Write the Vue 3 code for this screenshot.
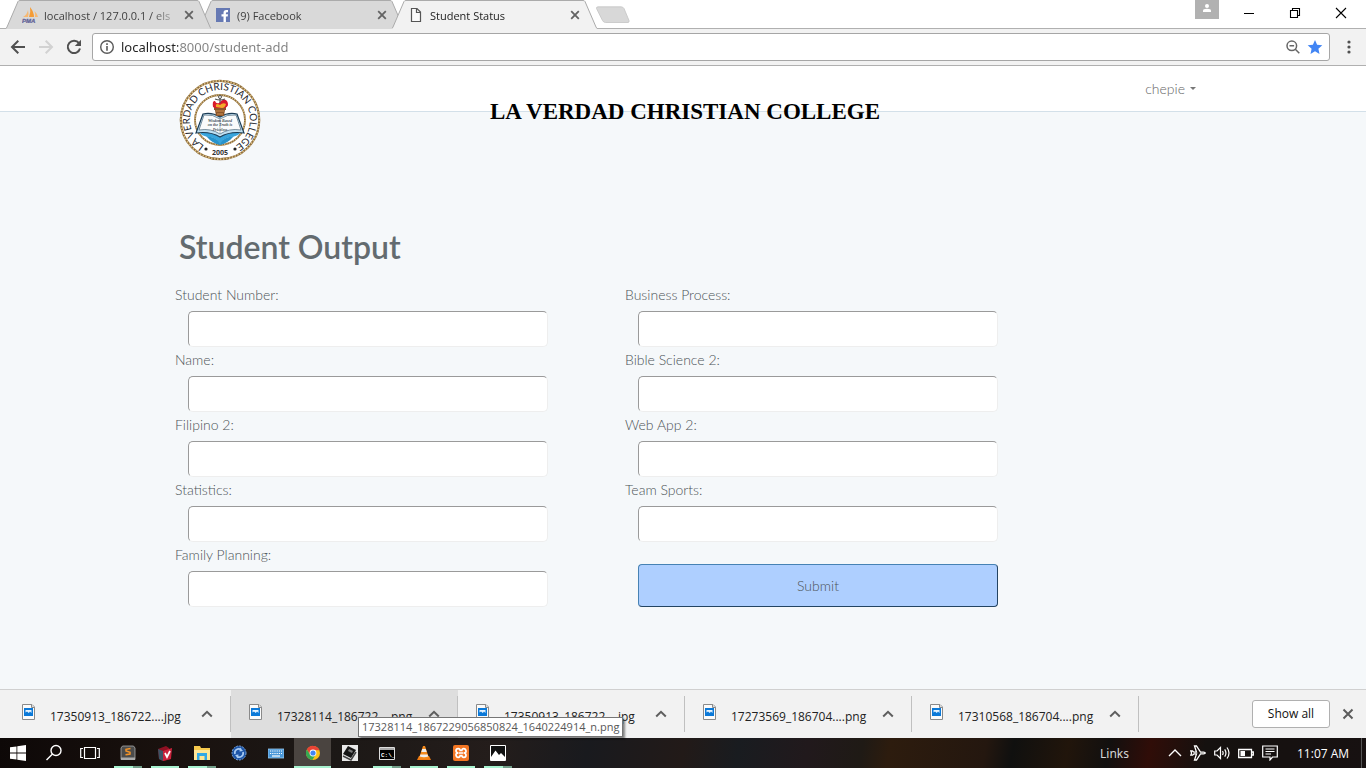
<script setup>
import { ref } from 'vue'

const tabs = [
  { title: 'localhost / 127.0.0.1 / els', icon: 'pma' },
  { title: '(9) Facebook', icon: 'fb' },
  { title: 'Student Status', icon: 'page', active: true },
]
const url = ref('localhost:8000/student-add')

const leftFields = [
  { id: 'number', label: 'Student Number:' },
  { id: 'name', label: 'Name:' },
  { id: 'filipino', label: 'Filipino 2:' },
  { id: 'statistics', label: 'Statistics:' },
  { id: 'family', label: 'Family Planning:' },
]
const rightFields = [
  { id: 'business', label: 'Business Process:' },
  { id: 'bible', label: 'Bible Science 2:' },
  { id: 'webapp', label: 'Web App 2:' },
  { id: 'sports', label: 'Team Sports:' },
]

const downloads = [
  { name: '17350913_186722....jpg' },
  { name: '17328114_186722....png', tip: '17328114_1867229056850824_1640224914_n.png' },
  { name: '17350913_186722....jpg' },
  { name: '17273569_186704....png' },
  { name: '17310568_186704....png' },
]

const apps = [
  { icon: 'sublime', label: 'Sublime Text', running: true, many: true },
  { icon: 'vred', label: 'Library', running: true },
  { icon: 'folder', label: 'File Explorer', running: true, many: true },
  { icon: 'globe', label: 'Globe' },
  { icon: 'keyboard', label: 'Keyboard' },
  { icon: 'chrome', label: 'Chrome', current: true },
  { icon: 'note', label: 'Notebook' },
  { icon: 'cmd', label: 'Command Prompt', running: true, many: true },
  { icon: 'vlc', label: 'VLC', running: true },
  { icon: 'xampp', label: 'XAMPP', running: true },
  { icon: 'photos', label: 'Photos', running: true, many: true },
]
</script>

<template>
  <div class="screen">
    <header class="tabstrip">
      <div class="tabs">
        <div v-for="t in tabs" :key="t.title" class="tab" :class="{ active: t.active }">
          <svg class="tab-shape" viewBox="0 0 205 29" preserveAspectRatio="none" aria-hidden="true">
            <path d="M0 28.5 L1 27 L12 1.5 Q12.500 .5 14 .5 H191 Q192.500 .5 193 1.500 L204 27 L205 28.500 V29 H0Z" class="tab-fill" />
            <path d="M0 28.5 L1 27 L12 1.5 Q12.500 .5 14 .5 H191 Q192.500 .5 193 1.500 L204 27 L205 28.500" class="tab-line" />
          </svg>
          <svg v-if="t.icon === 'pma'" class="favicon" viewBox="0 0 16 16" aria-hidden="true">
            <path d="M1 10 Q5 8 6 3 Q7 7 6 10Z" fill="#f7b871" />
            <path d="M7 10 Q9 5 8 0 Q12 5 12 10Z" fill="#f59c36" />
            <path d="M13 10 Q13.500 7 12.500 4 Q15.500 7 16 10Z" fill="#f7b871" />
            <text x="0" y="15.500" font-size="6" font-weight="700" font-style="italic" font-family="Liberation Sans, sans-serif" fill="#666699" stroke="#666699" stroke-width=".3">PMA</text>
          </svg>
          <svg v-else-if="t.icon === 'fb'" class="favicon" viewBox="0 0 16 16" aria-hidden="true">
            <path d="M1 1H15V15H1Z" fill="#6679b3" />
            <path d="M8.500 15V9.500H6.500V7.300H8.500V5.800Q8.500 3 11.200 3H13V5.200H11.800Q10.900 5.200 10.900 6.100V7.300H13L12.700 9.500H10.900V15Z" fill="#fff" />
          </svg>
          <svg v-else class="favicon" viewBox="0 0 16 16" aria-hidden="true">
            <path d="M3.500 1.500H9L12.500 5V14.500H3.500ZM8.500 1.500V5.500H12.500" fill="#fafafa" stroke="#555" stroke-width="1.200" />
          </svg>
          <span class="tab-title">{{ t.title }}</span>
          <button class="tab-close" aria-label="Close tab">
            <svg viewBox="0 0 10 10" width="10" height="10"><path d="M1.200 1.200 8.800 8.800M8.800 1.200 1.200 8.800" stroke="#636363" stroke-width="1.800" /></svg>
          </button>
        </div>
      </div>
      <button class="new-tab" aria-label="New tab">
        <svg viewBox="0 0 36 18" width="36" height="18"><path d="M3 .8H26Q28 .8 29 2.500L34 14.500Q34.500 16.500 33 16.500H10.500Q8.500 16.500 7.500 14.500L1.500 2.500Q1.200 .8 3 .8Z" fill="#d8d8d8" stroke="#c4c4c4" stroke-width=".8" /></svg>
      </button>
      <div class="window-controls">
        <button class="profile" aria-label="Profile">
          <svg viewBox="0 0 24 19" width="24" height="19"><circle cx="12" cy="6" r="2" fill="#fff" /><path d="M8 12V10.500Q8 9 12 8.800Q16 9 16 10.500V12Z" fill="#fff" /></svg>
        </button>
        <button class="win" aria-label="Minimize"><svg viewBox="0 0 12 12" width="12" height="12"><path d="M1 6.500H11" stroke="#000" /></svg></button>
        <button class="win" aria-label="Restore"><svg viewBox="0 0 12 12" width="12" height="12"><path d="M1.500 3.500H8.500V10.500H1.500ZM3.500 3V1.500H10.500V8.500H9" fill="none" stroke="#000" stroke-width="1.100" /></svg></button>
        <button class="win" aria-label="Close"><svg viewBox="0 0 12 12" width="12" height="12"><path d="M1 1 11 11M11 1 1 11" stroke="#000" stroke-width="1.100" /></svg></button>
      </div>
    </header>

    <nav class="toolbar">
      <button aria-label="Back"><svg viewBox="0 0 16 16" width="16" height="16"><path d="M15 8H2.500M8.300 1.800 2 8 8.300 14.200" fill="none" stroke="#505050" stroke-width="2" /></svg></button>
      <button aria-label="Forward"><svg viewBox="0 0 16 16" width="16" height="16"><path d="M1 8H13.500M7.700 1.800 14 8 7.700 14.200" fill="none" stroke="#d2d2d2" stroke-width="2" /></svg></button>
      <button aria-label="Reload"><svg viewBox="0 0 16 16" width="16" height="16"><path d="M13 4.200A6.200 6.200 0 1 0 14 9.500" fill="none" stroke="#505050" stroke-width="2" /><path d="M15 .8V7H8.800Z" fill="#505050" /></svg></button>
      <div class="omnibox">
        <svg class="info" viewBox="0 0 16 16" width="16" height="16" aria-hidden="true"><circle cx="8" cy="8" r="6.300" fill="none" stroke="#5a5a5a" stroke-width="1.400" /><path d="M7.200 7H8.800V11.700H7.200ZM7.200 4.300H8.800V5.900H7.200Z" fill="#5a5a5a" /></svg>
        <input v-model="url" class="url" aria-label="Address" spellcheck="false" />
        <button aria-label="Zoom"><svg viewBox="0 0 14 14" width="14" height="14"><circle cx="5.800" cy="5.800" r="4.800" fill="none" stroke="#666" stroke-width="1.500" /><path d="M3.500 5.800H8.100M9.300 9.300 13.300 13.300" stroke="#666" stroke-width="1.500" /></svg></button>
        <button aria-label="Bookmark"><svg viewBox="0 0 16 16" width="16" height="16"><path d="M8 1 10.100 5.800 15.300 6.300 11.400 9.800 12.500 15 8 12.200 3.500 15 4.600 9.800 .7 6.300 5.900 5.800Z" fill="#4285f4" /></svg></button>
      </div>
      <button class="menu" aria-label="Menu"><svg viewBox="0 0 4 14" width="4" height="14"><g fill="#505050"><circle cx="2" cy="2" r="1.600" /><circle cx="2" cy="7" r="1.600" /><circle cx="2" cy="12" r="1.600" /></g></svg></button>
    </nav>

    <main class="page">
      <div class="navbar">
        <div class="container">
          <svg class="seal" viewBox="0 0 82 82" aria-label="La Verdad Christian College seal">
            <defs>
              <path id="seal-arc" d="M23.800 65.600A30 30 0 1 1 58.200 65.600" />
            </defs>
            <circle cx="41" cy="41" r="39.200" fill="#fff" stroke="#8c6b3c" stroke-width="2.200" />
            <circle cx="41" cy="41" r="39.200" fill="none" stroke="#d8bd82" stroke-width="1.800" stroke-dasharray="1.500 1.500" />
            <circle cx="41" cy="41" r="25" fill="#fff" stroke="#8c6b3c" stroke-width="1.800" />
            <circle cx="41" cy="41" r="25" fill="none" stroke="#d8bd82" stroke-width="1.400" stroke-dasharray="1.200 1.200" />
            <text font-family="Lato, sans-serif" font-size="10" fill="#26272e"><textPath href="#seal-arc" startOffset="50%" text-anchor="middle">LA VERDAD CHRISTIAN COLLEGE</textPath></text>
            <path d="M19 50Q20 57 31 58Q38 59 41 66Q44 59 51 58Q62 57 63 50L53 48H29Z" fill="#38a5dc" />
            <path d="M27 57Q38 58 41 65Q44 58 55 57Q48 65 41 66Q34 65 27 57Z" fill="#2793cc" />
            <path d="M24 35 17 54Q31 52 41 58Q51 52 65 54L58 35Q49 33 41 38Q33 33 24 35Z" fill="#bfe0f2" stroke="#1c3d56" stroke-width="1.200" />
            <path d="M25 36Q34 35 41 40Q48 35 57 36L62 51Q50 49 41 55Q32 49 20 51Z" fill="#f9fbfc" stroke="#4b6678" stroke-width=".7" />
            <path d="M41 40V55" stroke="#6f93a8" stroke-width=".6" />
            <g font-family="Liberation Serif, serif" font-size="4" font-weight="700" font-style="italic" text-anchor="middle" fill="#3c4c55"><text x="41" y="42.500">Wisdom Based</text><text x="41" y="47">on the Truth is</text><text x="41" y="51.500">Priceless</text></g>
            <path d="M35 28H47V31H46L45 37H37L36 31H35Z" fill="#8a5529" />
            <path d="M37 32H45M38 35H44" stroke="#d19354" stroke-width="1" />
            <path d="M34 28Q33 21 36 22Q37 25 40 24Q45 18 48 22Q51 27 46 29H36Z" fill="#d8192b" />
            <path d="M37 28Q36 23 41 26Q44 23 47 25Q46 29 43 29Z" fill="#f2aa28" />
            <path d="M41 24V19M36 20Q41 22 46 20" fill="none" stroke="#555" stroke-width="1.200" /><circle cx="41" cy="18" r="1.500" fill="none" stroke="#555" />
            <circle cx="27" cy="70" r="1.600" fill="#222" /><circle cx="56" cy="70" r="1.600" fill="#222" />
            <text x="41" y="75.500" font-family="Open Sans, sans-serif" font-size="7" font-weight="700" text-anchor="middle" fill="#333">2005</text>
          </svg>
          <h1 class="college">LA VERDAD CHRISTIAN COLLEGE</h1>
          <a class="user" href="#">chepie <span class="caret"></span></a>
        </div>
      </div>

      <div class="container">
        <form class="form" @submit.prevent>
          <h2>Student Output</h2>
          <div class="columns">
            <div class="column">
              <div v-for="f in leftFields" :key="f.id" class="field">
                <label :for="f.id">{{ f.label }}</label>
                <input :id="f.id" type="text" />
              </div>
            </div>
            <div class="column">
              <div v-for="f in rightFields" :key="f.id" class="field">
                <label :for="f.id">{{ f.label }}</label>
                <input :id="f.id" type="text" />
              </div>
              <button type="submit" class="submit">Submit</button>
            </div>
          </div>
        </form>
      </div>
    </main>

    <section class="shelf" aria-label="Downloads">
      <div v-for="(d, i) in downloads" :key="i" class="download" :class="{ hovered: d.tip }">
        <svg class="file" viewBox="0 0 14 16" width="14" height="16" aria-hidden="true">
          <path d="M.5 .5H10L12.500 3V15.500H.5Z" fill="#fbfbfb" stroke="#8a8a8a" />
          <path d="M9.500 .5V3.500H12.500" fill="#ddd" stroke="#8a8a8a" />
          <path d="M2 4H11V12H2Z" fill="#0b79d8" />
          <path d="M3.500 6H9.500V9L8 7.500 6.800 9 5 7.500 3.500 8.500Z" fill="#e5f3ff" />
        </svg>
        <span class="filename">{{ d.name }}</span>
        <button class="more" aria-label="File options"><svg viewBox="0 0 12 8" width="12" height="8"><path d="M1.200 6.500 6 1.800 10.800 6.500" fill="none" stroke="#5e5e5e" stroke-width="2" /></svg></button>
        <div v-if="d.tip" class="tooltip" role="tooltip">{{ d.tip }}</div>
      </div>
      <button class="show-all">Show all</button>
      <button class="close-shelf" aria-label="Close downloads"><svg viewBox="0 0 12 12" width="12" height="12"><path d="M1.500 1.500 10.500 10.500M10.500 1.500 1.500 10.500" stroke="#5c5c5c" stroke-width="2" /></svg></button>
    </section>

    <footer class="taskbar">
      <button class="task" aria-label="Start"><svg viewBox="0 0 16 16" width="16" height="16"><path d="M0 2.300 6.500 1.400V7.500H0ZM7.300 1.200 16 0V7.500H7.300ZM0 8.400H6.500V14.600L0 13.700ZM7.300 8.400H16V16L7.300 14.800Z" fill="#fff" /></svg></button>
      <button class="task" aria-label="Search"><svg viewBox="0 0 18 18" width="18" height="18"><circle cx="11" cy="6.500" r="5" fill="none" stroke="#fff" stroke-width="1.400" /><path d="M7.500 10 1.500 16" stroke="#fff" stroke-width="1.500" /></svg></button>
      <button class="task" aria-label="Task view"><svg viewBox="0 0 20 16" width="20" height="16"><path d="M4.500 2.500H15.500V13.500H4.500ZM3 3.500H.7V12.500H3M17 3.500H19.300V12.500H17" fill="none" stroke="#fff" stroke-width="1.200" /></svg></button>
      <div class="apps">
        <button v-for="a in apps" :key="a.icon" class="app" :class="{ running: a.running, many: a.many, current: a.current }" :aria-label="a.label">
          <svg viewBox="0 0 16 16" width="16" height="16">
            <g v-if="a.icon === 'sublime'">
              <path d="M2.500 1H13.500L15 3V14.500H1V3Z" fill="#4b4b4b" stroke="#aaa" stroke-width=".8" /><path d="M1 12.500H15V15H1Z" fill="#aaa" />
              <path d="M10.500 3.500 6 4.300V6L10 7.200V9L5.500 9.800" fill="none" stroke="#f39328" stroke-width="1.500" />
            </g>
            <g v-else-if="a.icon === 'vred'">
              <path d="M1 4 9 1 12 3 14 14 6 16 2 14Z" fill="#8e1022" /><path d="M1 4 6 6 6 16 2 14Z" fill="#3c5263" /><path d="M6 6 15 3 14 14 6 16Z" fill="#c9223b" /><path d="M8 8 10 12 13 6" fill="none" stroke="#fff" stroke-width="1.700" />
            </g>
            <g v-else-if="a.icon === 'folder'">
              <path d="M0 1H6L7 3H16V15H0Z" fill="#f6c94d" /><path d="M0 5H16V15H0Z" fill="#ffe797" /><path d="M3 15V8H13V15H10.500V11H5.500V15Z" fill="#33a9e5" />
            </g>
            <g v-else-if="a.icon === 'globe'">
              <circle cx="8" cy="8" r="7" fill="#1d55a8" stroke="#78a5de" stroke-dasharray="2 1" /><path d="M4 9A4 4 0 0 1 10 4.500M12 7A4 4 0 0 1 6 11.500" fill="none" stroke="#a9cbf2" stroke-width="1.700" /><path d="M9 2.500 12 6 8.500 6.500ZM7 13.500 4 10 7.500 9.500Z" fill="#a9cbf2" />
            </g>
            <g v-else-if="a.icon === 'keyboard'">
              <path d="M0 4H16V13H0Z" fill="#4a98da" stroke="#9dcdf3" stroke-width=".8" /><path d="M2 6H14M2 8.500H14" stroke="#fff" stroke-dasharray="1.200 1" stroke-width="1.200" /><path d="M4 11H12" stroke="#fff" stroke-width="1.200" />
            </g>
            <g v-else-if="a.icon === 'chrome'">
              <circle cx="8" cy="8" r="7" fill="#fbc116" /><path d="M1.900 4.500A7 7 0 0 1 14.500 5.200H8L5 9.800Z" fill="#e84335" /><path d="M1.900 4.500A7 7 0 0 0 7.400 15L10.700 9.600H5Z" fill="#35a853" /><circle cx="8" cy="8" r="3.400" fill="#fff" /><circle cx="8" cy="8" r="2.600" fill="#4285f4" />
            </g>
            <g v-else-if="a.icon === 'note'">
              <path d="M0 0H16V16H0Z" fill="#e9e9e9" /><path d="M6 1 14 5 9 13 1 9Z" fill="#151515" /><path d="M7 4 11 6 10 8 6 6Z" fill="#777" /><path d="M1 11 9 15 14 7" fill="none" stroke="#444" stroke-width="1.500" />
            </g>
            <g v-else-if="a.icon === 'cmd'">
              <path d="M.5 2.500H15.500V14.500H.5Z" fill="#000" stroke="#ddd" /><path d="M1 3H15V5H1Z" fill="#aaa" /><text x="2" y="11.500" font-family="Liberation Mono, monospace" font-size="6" font-weight="700" fill="#fff">C:\_</text>
            </g>
            <g v-else-if="a.icon === 'vlc'">
              <path d="M3 11H13L15 15H1Z" fill="#f27b12" /><path d="M7 1H9L13 13Q8 15 3 13Z" fill="#f58a1b" /><path d="M6.200 4H9.800L10.700 7H5.300ZM4.400 9.500H11.600L12.200 11.500Q8 13 3.800 11.500Z" fill="#eee" />
            </g>
            <g v-else-if="a.icon === 'xampp'">
              <rect width="16" height="16" rx="2" fill="#f37623" />
              <path d="M6 8H10M5.500 8Q3 8 3 5.800T5.200 3.600Q7 3.600 7.200 5.500L8.800 5.500Q9 3.600 10.800 3.600T13 5.800 10.500 8Q13 8 13 10.200T10.800 12.400Q9 12.400 8.800 10.500H7.200Q7 12.400 5.200 12.400T3 10.200 5.500 8Z" fill="none" stroke="#fff" stroke-width="1.700" />
            </g>
            <g v-else>
              <path d="M.5 .5H15.500V15.500H.5Z" fill="#111" stroke="#fff" /><path d="M1 12 5.500 5.500 9 10 11 8 15 12V15H1Z" fill="#fff" />
            </g>
          </svg>
        </button>
      </div>
      <span class="links">Links</span>
      <div class="tray">
        <svg viewBox="0 0 14 16" width="14" height="16"><path d="M1 11 7 5 13 11" fill="none" stroke="#fff" stroke-width="1.400" /></svg>
        <svg viewBox="0 0 16 16" width="16" height="16"><path d="M.8 6H2.500L4 7.200H6.500L4.500 1H6.500L10.500 7.200H13.500Q15.300 7.400 15.300 8Q15.300 8.700 13.500 8.900H10.500L6.500 15H4.500L6.500 8.900H4L2.500 10.200H.8L1.600 8Z" fill="none" stroke="#fff" stroke-width="1.300" /></svg>
        <svg viewBox="0 0 16 16" width="16" height="16"><path d="M.7 6H3L6.500 2.500V13.500L3 10H.7ZM8.500 6Q9.800 8 8.500 10M10.700 4.300Q13.200 8 10.700 11.700M13 2.500Q17 8 13 13.500" fill="none" stroke="#fff" stroke-width="1.200" /></svg>
        <svg viewBox="0 0 16 16" width="16" height="16"><path d="M.7 4.500H13.500V12.500H.7ZM14 7H15.300V10H14" fill="none" stroke="#fff" stroke-width="1.300" /><path d="M2.500 6H7V11H2.500Z" fill="#fff" /></svg>
        <svg viewBox="0 0 16 16" width="16" height="16"><path d="M.7 1H15.300V12H10.500L8 15 8 12H.7ZM3.500 4H12.500M3.500 6.500H12.500M3.500 9H9" fill="none" stroke="#fff" stroke-width="1.200" /></svg>
      </div>
      <time class="clock">11:07 AM</time>
      <span class="desktop-edge"></span>
    </footer>
  </div>
</template>

<style>
html, body { margin: 0; }
</style>

<style scoped>
.screen { display: flex; flex-direction: column; min-height: 100vh; font-family: "Noto Sans", "Open Sans", sans-serif; font-size: 12px; color: #222; background: #f5f8fa; overflow-x: hidden; }
.screen *, .screen *::before { box-sizing: border-box; }
button { border: 0; padding: 0; background: none; font: inherit; color: inherit; display: flex; align-items: center; justify-content: center; }
svg { display: block; flex: none; }

.tabstrip { display: flex; height: 29px; background: #fff; box-shadow: inset 0 -1px #b0b0b0; }
.tabs { display: flex; padding-left: 6px; }
.tab { position: relative; display: flex; align-items: center; width: 205px; height: 29px; padding: 1px 12px 0 16px; margin-right: -12px; font-family: "Open Sans", sans-serif; font-size: 11px; color: #404040; }
.tab:nth-child(1) { z-index: 2; }
.tab:nth-child(2) { z-index: 1; }
.tab.active { z-index: 3; color: #222; }
.tab-shape { position: absolute; inset: 0; width: 100%; height: 100%; z-index: -1; }
.tab-fill { fill: #d9d9d9; }
.active .tab-fill { fill: #f2f2f2; }
.tab-line { fill: none; stroke: #ababab; }
.tab:not(.active) { box-shadow: inset 0 -1px #b0b0b0; }
.favicon { width: 16px; height: 16px; }
.tab-title { flex: 1; margin-left: 6px; white-space: nowrap; -webkit-mask-image: linear-gradient(90deg, #000 106px, transparent 138px); mask-image: linear-gradient(90deg, #000 106px, transparent 138px); }
.tab-close { width: 20px; height: 20px; flex: none; }
.new-tab { margin: 6px 0 0 10px; align-self: flex-start; }
.window-controls { margin-left: auto; padding-right: 2px; display: flex; align-items: flex-start; }
.profile { width: 24px; height: 19px; margin-right: 7px; background: #b1b1b1; }
.win { width: 46px; height: 26px; }

.toolbar { display: flex; align-items: center; gap: 12px; height: 37px; padding: 0 10px; background: #f2f2f2; border-bottom: 1px solid #b0b0b0; }
.omnibox { flex: 1; display: flex; align-items: center; height: 28px; margin-left: -2px; padding: 0 6px; gap: 6px; background: #fff; border: 1px solid #a6a6a6; border-radius: 3px; }
.omnibox button { width: 16px; height: 16px; }
.url { flex: 1; min-width: 0; border: 0; padding: 0; outline: 0; height: 24px; font: 13px "Noto Sans", sans-serif; color: transparent; background: linear-gradient(90deg, #222 57px, #808080 57px); -webkit-background-clip: text; background-clip: text; }
.menu { width: 14px; }

.page { flex: 1; background: #f5f8fa; font-family: Lato, sans-serif; color: #636b6f; }
.container { position: relative; max-width: 1170px; margin: 0 auto; padding: 0 72px 0 77px; }
.navbar { height: 46px; background: #fff; border-bottom: 1px solid #d3e0e9; }
.navbar .container { display: flex; }
.seal { position: absolute; left: 81px; top: 13px; width: 82px; height: 82px; }
.college { position: absolute; left: 392px; top: 32px; margin: 0; font: bold 23px/28px "Liberation Serif", serif; color: #000; white-space: nowrap; }
.user { display: flex; align-items: center; gap: 5px; height: 45px; margin-left: auto; color: #666; font-size: 14px; font-weight: 300; text-decoration: none; }
.caret { border: 3px solid transparent; border-top-color: #777; border-bottom: 0; }

.form { padding-top: 115px; }
h2 { margin: 0 0 15px 4px; font-size: 32px; line-height: 40px; font-weight: 600; }
.columns { display: grid; grid-template-columns: 450px 450px; }
.field { display: flex; flex-direction: column; }
label { padding-bottom: 3px; font-size: 14px; line-height: 26px; font-weight: 300; color: #4c5357; }
.field input { width: 360px; height: 36px; margin-left: 13px; padding: 0 12px; border: 1px solid #eee; border-top-color: #9a9a9a; border-left-color: #9a9a9a; border-radius: 5px; background: #fff; font: inherit; }
.submit { width: 360px; height: 43px; margin: 22px 0 0 13px; border: 1px solid #4682b4; border-right-color: #234462; border-bottom-color: #234462; border-radius: 4px; background: #aecfff; color: #4c5357; font-size: 14px; font-weight: 300; }

.shelf { display: flex; align-items: center; height: 49px; background: #f2f2f2; border-top: 1px solid #d0d0d0; }
.download { position: relative; display: flex; align-items: center; width: 227px; height: 48px; padding-left: 18px; font-size: 12px; }
.download:first-child { width: 231px; padding-left: 22px; }
.download::after { content: ""; position: absolute; right: 0; top: 6px; bottom: 6px; width: 1px; background: #c0c0c0; }
.download.hovered { background: #dedede; }
.file { margin-bottom: 4px; }
.filename { flex: 1; margin-left: 14px; padding-top: 5px; font-family: "Open Sans", sans-serif; white-space: nowrap; }
.more { width: 16px; height: 16px; margin-right: 16px; }
.tooltip { position: absolute; z-index: 5; left: 127px; top: 27px; height: 20px; padding: 0 3px; border: 1px solid #767676; background: #fff; box-shadow: 2px 2px 2px rgba(0, 0, 0, .45); color: #575757; font: 11px/18px "Open Sans", sans-serif; white-space: nowrap; }
.show-all { width: 78px; height: 28px; margin-left: auto; padding-bottom: 2px; border: 1px solid #b0b0b0; border-radius: 3px; background: #fff; color: #111; font-family: "Open Sans", sans-serif; }
.close-shelf { width: 12px; height: 12px; margin: 0 12px; }

.taskbar { display: flex; align-items: center; height: 30px; color: #fff; background: linear-gradient(100deg, #0d0807 0, #19110e 12%, #1c1816 25%, #241d1b 36%, #191a1e 43%, #221a18 50%, #191c20 54%, #21191c 59%, #1f1a15 63%, #2d1c0e 65%, #24170f 72%, #10100f 74%, #21150b 78%, #12100f 81%, #300d08 84%, #15110f 88%, #171111 100%); }
.task { width: 36px; height: 30px; }
.apps { display: flex; margin-left: 1px; }
.app { position: relative; width: 37px; height: 30px; }
.app.current { background: #4a4440; }
.app.running::after, .app.current::after { content: ""; position: absolute; left: 5px; right: 4px; bottom: 0; height: 2px; background: #a7f2cf; }
.app.many::after { background: linear-gradient(90deg, #a7f2cf 19px, #729e89 19px); }
.app.current::after { left: 0; right: 0; }
.links { margin-left: auto; margin-right: 39px; color: #d5d5d5; font-size: 12px; }
.tray { display: flex; align-items: center; gap: 8px; }
.clock { width: 50px; margin-left: 19px; font-family: "Open Sans", sans-serif; font-size: 12px; white-space: nowrap; }
.desktop-edge { width: 1px; height: 30px; margin: 0 4px 0 14px; background: #555; }
</style>
